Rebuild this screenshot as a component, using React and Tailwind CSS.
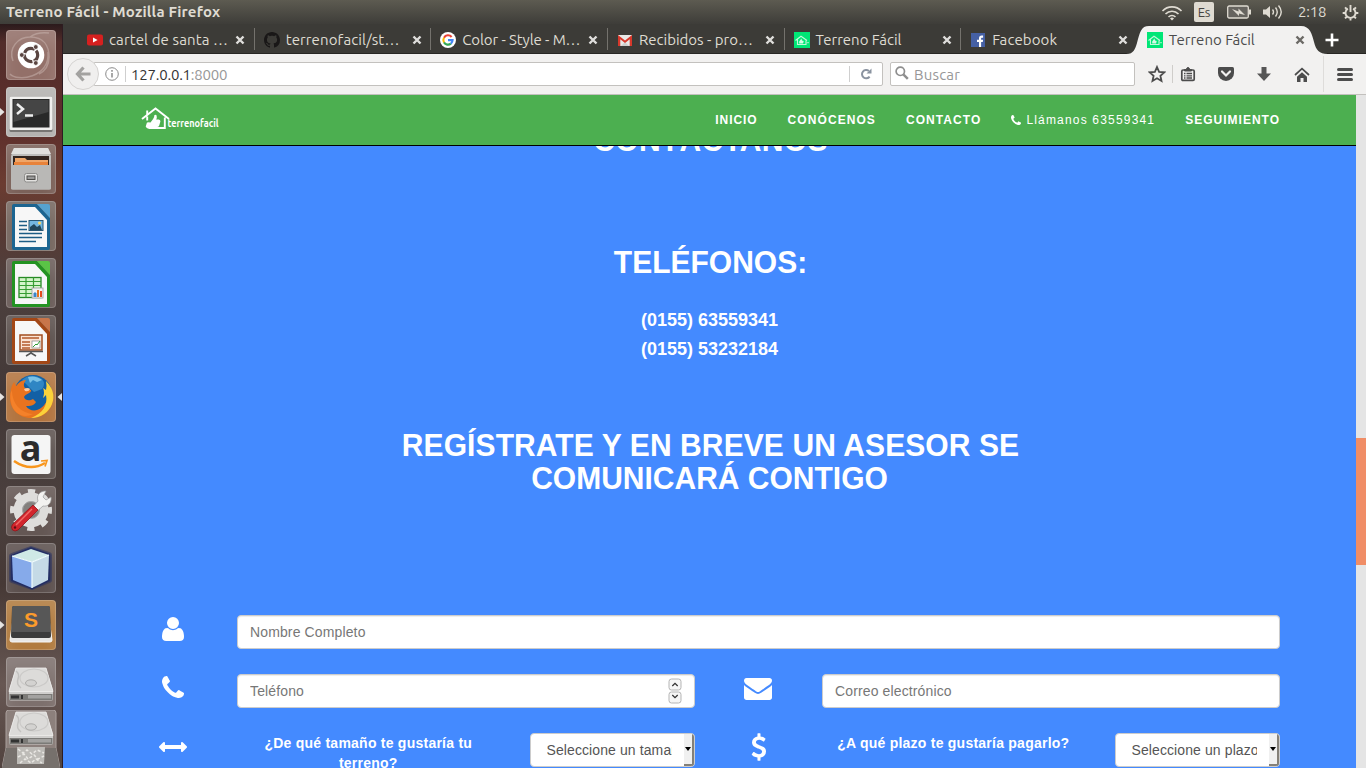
import React from "react";

const UBUNTU = "font-['Ubuntu','Noto_Sans',sans-serif]";

/* ---------- favicons ---------- */
function Youtube() {
  return (
    <svg viewBox="0 0 16 16" className="h-4 w-4">
      <rect x="0" y="2.5" width="16" height="11" rx="2" fill="#d6201f" />
      <path d="M6 5.5v5l4.6-2.5z" fill="#fff" />
    </svg>
  );
}
function Github() {
  return (
    <svg viewBox="0 0 16 16" className="h-4 w-4">
      <path
        fill="#191717"
        d="M8 0C3.58 0 0 3.58 0 8c0 3.54 2.29 6.53 5.47 7.59.4.07.55-.17.55-.38 0-.19-.01-.82-.01-1.49-2.01.37-2.53-.49-2.69-.94-.09-.23-.48-.94-.82-1.13-.28-.15-.68-.52-.01-.53.63-.01 1.08.58 1.23.82.72 1.21 1.87.87 2.33.66.07-.52.28-.87.51-1.07-1.78-.2-3.64-.89-3.64-3.95 0-.87.31-1.59.82-2.15-.08-.2-.36-1.02.08-2.12 0 0 .67-.21 2.2.82.64-.18 1.32-.27 2-.27s1.36.09 2 .27c1.53-1.04 2.2-.82 2.2-.82.44 1.1.16 1.92.08 2.12.51.56.82 1.27.82 2.15 0 3.07-1.87 3.75-3.65 3.95.29.25.54.73.54 1.48 0 1.07-.01 1.93-.01 2.2 0 .21.15.46.55.38A8.01 8.01 0 0 0 16 8c0-4.42-3.58-8-8-8z"
      />
    </svg>
  );
}
function Google() {
  return (
    <svg viewBox="0 0 16 16" className="h-4 w-4" fill="none" strokeWidth="2.1">
      <circle cx="8" cy="8" r="8" fill="#fff" />
      <path d="M11.6 5A4.6 4.6 0 0 0 4 5.7" stroke="#ea4335" />
      <path d="M4 5.7a4.7 4.7 0 0 0 0 4.7" stroke="#fbbc05" />
      <path d="M4 10.4a4.6 4.6 0 0 0 6.9 1.2" stroke="#34a853" />
      <path d="M8 8.1h4.6a4.6 4.6 0 0 1-1.7 3.5" stroke="#4285f4" />
    </svg>
  );
}
function Gmail() {
  return (
    <svg viewBox="0 0 16 16" className="h-4 w-4">
      <rect x="1" y="3" width="14" height="11" fill="#e9e9e7" />
      <path d="M4 14l4-4 4 4z" fill="#cfcfcd" />
      <path d="M1 14V3l7 5.5L15 3v11h-2.3V7.3L8 11 3.3 7.3V14z" fill="#d8382b" />
    </svg>
  );
}
function House() {
  return (
    <svg viewBox="0 0 16 16" className="h-4 w-4">
      <rect width="16" height="16" fill="#00e676" />
      <path d="M1.500 8.500L7 4.200l6 4.300M3.500 7.500v5h8.500V8.500" fill="none" stroke="#c3f7da" strokeWidth="1.100" />
      <path d="M5.200 11.500V9.500L7.400 6.500l.6 2 1.700.5-.6 2.500z" fill="#d5fae5" />
      <path d="M12.500 10.700h2.500" stroke="#a0f0c4" />
    </svg>
  );
}
function Facebook() {
  return (
    <svg viewBox="0 0 16 16" className="h-4 w-4">
      <rect x="1" y="1" width="14" height="14" fill="#4560a4" />
      <path d="M9 15V10H7V7.8h2V6.3C9 4.5 10 3.6 11.7 3.6h1.4v2.1h-1c-.8 0-1 .4-1 1v1.1h2L12.800 10h-1.700v5z" fill="#fff" />
    </svg>
  );
}

const TABS = [
  { icon: Youtube, label: "cartel de santa …", cls: "tracking-[0.12px]" },
  { icon: Github, label: "terrenofacil/st…", cls: "tracking-[0.12px]" },
  { icon: Google, label: "Color - Style - M…", cls: "tracking-[-0.1px]" },
  { icon: Gmail, label: "Recibidos - pro…", cls: "tracking-[0px]" },
  { icon: House, label: "Terreno Fácil", cls: "tracking-[0px]" },
  { icon: Facebook, label: "Facebook", cls: "tracking-[0.1px]" },
  { icon: House, label: "Terreno Fácil", cls: "tracking-[0px]", active: true },
];

function Tab({ tab, divider }) {
  const Icon = tab.icon;
  return (
    <div className="relative flex h-[29px] w-[176.650px] shrink-0 items-center">
      {tab.active && (
        <svg viewBox="0 0 204 28" className="absolute top-[2px] left-[-12px] h-[28px] w-[204px]">
          <path d="M0 28C8 28 9 23 11 17C14 6 15 0 23 0H175C184 0 186 8 188 16C190 24 193 28 202 28Z" fill="#f2f1f0" />
        </svg>
      )}
      <div className="relative flex h-full w-full items-center pt-[3px] pl-[9px]">
        <Icon />
        <span
          className={`-mt-[2px] ml-[6px] w-[124px] text-[15px] leading-none whitespace-nowrap ${tab.cls} ${
            tab.active ? "text-[#4c4c4c]" : "text-[#dfdbd2]"
          }`}
        >
          {tab.label}
        </span>
        <svg viewBox="0 0 10 10" className="ml-[2px] h-[10px] w-[10px]">
          <path d="M1.500 1.500L8.500 8.500M8.500 1.500L1.500 8.500" strokeWidth="2.400" stroke={tab.active ? "#6b6965" : "#dfdedc"} />
        </svg>
      </div>
      {divider && <div className="h-[22px] w-px shrink-0 bg-[#74726d]" />}
    </div>
  );
}

/* ---------- top panel ---------- */
function TopPanel() {
  return (
    <div className="flex h-6 items-center bg-linear-to-b from-[#5d5b51] to-[#3e3d39] pl-[6px] text-[#dfdbd2]">
      <span className="-mt-[2px] text-[15px] leading-none font-bold tracking-[0.200px] whitespace-nowrap">Terreno Fácil - Mozilla Firefox</span>
      <svg viewBox="0 0 22 16" className="mt-[1px] ml-auto h-4 w-[22px]" fill="none" stroke="#dfdbd2" strokeWidth="1.600">
        <path d="M1.500 6A13 13 0 0 1 20.500 6M4.500 9a9 9 0 0 1 13 0M7.500 12a5 5 0 0 1 7 0" />
        <path d="M9 13.500a3 3 0 0 1 4 0L11 15.500z" fill="#dfdbd2" stroke="none" />
      </svg>
      <span className="ml-[11px] flex h-5 w-5 items-center justify-center rounded-[2px] bg-[#dfdbd2] text-[13px] leading-none tracking-[-0.300px] text-[#45433f]">
        Es
      </span>
      <svg viewBox="0 0 24 14" className="ml-[13px] h-[14px] w-6">
        <rect x="0.700" y="1" width="20.600" height="12" rx="1.500" fill="#66645f" stroke="#dfdbd2" strokeWidth="1.300" />
        <rect x="22" y="4.500" width="2" height="5" fill="#dfdbd2" />
        <path d="M5 4l6.500 2.500V3.500L18 10l-6-1.500V11z" fill="#dfdbd2" />
      </svg>
      <svg viewBox="0 0 21 16" className="ml-[12px] h-4 w-[21px]" fill="none" stroke="#dfdbd2" strokeWidth="1.400">
        <path d="M0 5.500h3L7 2v12l-4-3.500H0z" fill="#dfdbd2" stroke="none" />
        <path d="M9.500 5.500q2 2.500 0 5M12.500 3.500q3.500 4.500 0 9M15.500 1.500q5.500 6.500 0 13" />
      </svg>
      <span className="-mt-[2px] ml-[14px] w-[30px] text-[15px] leading-none tracking-[-0.200px]">2:18</span>
      <svg viewBox="0 0 18 18" className="mr-[7px] ml-[14px] h-[17px] w-[17px]" fill="none" stroke="#dfdbd2">
        <path d="M6.200 4.900a5.300 5.300 0 1 0 5.600 0" strokeWidth="2" />
        <path d="M9 1v7.500" strokeWidth="2" />
        <path d="M3.200 3.500l1.800 1.800M14.800 3.500L13 5.300M.7 9.500h2.800M14.500 9.500h2.800M3.200 15.300L5 13.500M14.800 15.300L13 13.500M9 15v2.600" strokeWidth="2" />
      </svg>
    </div>
  );
}

/* ---------- launcher icons, all on a 50x50 tile ---------- */
function Doc({ color, light, children }) {
  return (
    <>
      <path d="M8 3h23l13 14v30q0 2-2 2H8q-2 0-2-2V5q0-2 2-2z" fill={color} />
      <path d="M9 6h20l12 13v27H9z" fill="#f7f7f7" />
      <path d="M31 3h11q2 0 2 2v12z" fill={light} />
      {children}
    </>
  );
}
function Disk({ y = 0 }) {
  return (
    <g transform={`translate(0 ${y})`}>
      <path d="M10 11h30l7 22v9q0 1.500-2 1.500H5q-2 0-2-1.500v-9z" fill="#cfcecc" />
      <path d="M10 11h30l7 23.500H3z" fill="#dcdbd9" stroke="#efeeec" strokeWidth=".8" />
      <ellipse cx="28" cy="21" rx="14" ry="9" fill="none" stroke="#cbcac8" strokeWidth="1.200" />
      <ellipse cx="25" cy="26" rx="5.500" ry="3.200" fill="#d3d2d0" stroke="#aeadab" />
      <path d="M10 14q4 3 2 8t3 9" fill="none" stroke="#c3c2c0" strokeWidth="1.500" />
      <path d="M3.500 37h43v6h-43z" fill="#7b7a77" />
      <path d="M5 38.500h8v3H5zM15 38h2v4h-2z" fill="#333" />
      <path d="M22 38h23v3.500H22z" fill="#a3a2a0" />
    </g>
  );
}

const GLYPHS = {
  dash: (
    <>
      <path d="M7 31C2 18 12 7 24 7c14 0 19 9 19 20 0 8-4 14-10 17M4 44C11 52 44 48 42 22M43 3C34 2 28 4 24 7" fill="none" stroke="#d9c8c4" strokeWidth="1.500" opacity=".4" />
      <circle cx="25" cy="25" r="13.300" fill="#fff" />
      <circle cx="25" cy="25" r="6.700" fill="none" stroke="#5a4541" strokeWidth="3.200" strokeDasharray="12.500 1.530" strokeDashoffset="5" />
      <g fill="#5a4541" stroke="#fff" strokeWidth=".8">
        <circle cx="15.800" cy="25" r="2.400" />
        <circle cx="29.800" cy="17" r="2.400" />
        <circle cx="29.800" cy="33" r="2.400" />
      </g>
    </>
  ),
  terminal: (
    <>
      <rect x="3.500" y="9.500" width="43" height="35.500" rx="1.500" fill="#777573" />
      <rect x="3.500" y="9.500" width="43" height="33.500" rx="1.500" fill="#f0efee" />
      <rect x="6.500" y="12" width="37" height="28.500" fill="#292929" />
      <path d="M7.500 13h35v12L7.500 35z" fill="#454545" />
      <path d="M11 17l6 5-6 5" fill="none" stroke="#eee" strokeWidth="2.500" />
      <path d="M19 28.500h8" stroke="#eee" strokeWidth="2.500" />
    </>
  ),
  files: (
    <>
      <path d="M8 4h34l3 8v32q0 1.500-2 1.500H7q-2 0-2-1.500V12z" fill="#bebdbb" />
      <path d="M8 4h34l3 6H5z" fill="#e1e0de" />
      <path d="M7 12h36v9H7z" fill="#33251f" />
      <path d="M9 14h10l2 2h21v6H9z" fill="#efa568" />
      <path d="M8 18h34v4H8z" fill="#e8823a" />
      <path d="M5 21h40v23q0 1.500-2 1.500H7q-2 0-2-1.500z" fill="#b9b8b6" />
      <rect x="18.500" y="29.500" width="13" height="8.500" rx="2" fill="#e2e1df" stroke="#8d8c8a" />
      <rect x="21" y="32" width="8" height="3.500" fill="#999" stroke="#4e4d4b" />
    </>
  ),
  writer: (
    <Doc color="#1c6591" light="#56a2cf">
      <path d="M13 20.500h8M13 24.500h8M13 28.500h8M13 32.500h23M13 36.500h23M13 40.500h17" stroke="#1d5d85" strokeWidth="1.700" />
      <rect x="23" y="19.500" width="14" height="10" fill="#73b6df" stroke="#275774" />
      <path d="M24 29v-3l4-3 3 3 3-2 2 5z" fill="#21465a" />
      <circle cx="33.500" cy="22" r="1.500" fill="#ffd760" />
    </Doc>
  ),
  calc: (
    <Doc color="#239322" light="#5ac446">
      <rect x="13" y="19.500" width="22" height="20" fill="#d4f4ca" stroke="#268a24" strokeWidth="1.300" />
      <path d="M13 23.500h22M13 27.500h22M13 31.500h22M13 35.500h22M20 19.500v20M27.500 19.500v20" stroke="#379d33" strokeWidth="1.200" />
      <rect x="26" y="30" width="11" height="10" fill="#f2f2f2" stroke="#999" strokeWidth=".8" />
      <path d="M28 39v-4h2v4" fill="#3b86c9" stroke="#3b86c9" />
      <path d="M31 39v-7h2v7z" fill="#e8741c" />
      <path d="M34 39v-6h2v6z" fill="#e34b20" />
    </Doc>
  ),
  impress: (
    <Doc color="#a34716" light="#c8754a">
      <rect x="14" y="20" width="22" height="15" fill="#fbe4d5" stroke="#a34d1f" strokeWidth="1.500" />
      <path d="M16 23h17M16 27h8M16 30h8M16 33h8" stroke="#b45a2c" strokeWidth="1.500" />
      <rect x="26" y="26" width="8" height="7" fill="#fff" stroke="#888" strokeWidth=".7" />
      <path d="M27 32l3-3 1 1 3-4" stroke="#2c9b35" fill="none" />
      <path d="M13 36.500h24M25 36v2l-5 3M25 38l5 3" stroke="#555" strokeWidth="1.500" fill="none" />
    </Doc>
  ),
  firefox: (
    <>
      <circle cx="27" cy="22" r="19" fill="#1260a5" />
      <path d="M16 8Q25 0 36 7q4 5 0 10l-8 3-6-6z" fill="#2f86c4" />
      <path d="M22 5q8-2 14 3l-5 2-4-2-3 3z" fill="#7cc2e6" />
      <path
        d="M42 13c5 6 6 13 4 19-3 9-11 14-21 14C13 46 4 37 4 26c0-6 1-12 4-16l2 4c3-4 6-6 10-6-2 3-3 5-1 8l6 2c1 3-6 4-7 7 1 4 6 4 9 2l3 3c-2 4-6 4-10 4 3 5 10 6 15 2 7-5 9-14 7-23z"
        fill="#e8731f"
      />
      <path d="M40 9c7 7 9 15 6 23-3 8-11 14-21 14 12-5 17-13 15-23l-3 3q2-6 0-10l3 2q1-4 0-9z" fill="#fbd23a" />
      <path d="M6 18c0 14 9 23 21 24-9 5-20 0-22-12-1-5-1-9 1-12z" fill="#f4812a" />
      <path d="M18 17q4-2 6 0-1 3-5 2z" fill="#f8cba5" />
    </>
  ),
  amazon: (
    <>
      <rect x="5.500" y="6" width="39" height="39" rx="3" fill="#f5f5f5" />
      <text x="24.500" y="31.500" textAnchor="middle" fontFamily="Open Sans, sans-serif" fontWeight="700" fontSize="36" fill="#2c2c2c">a</text>
      <path d="M8 32q16 11 31 2" fill="none" stroke="#f8961d" strokeWidth="2.500" />
      <path d="M35 32l6-.5-2 6" fill="none" stroke="#f8961d" strokeWidth="1.700" />
    </>
  ),
  settings: (
    <>
      <circle cx="25" cy="24" r="13" fill="none" stroke="#dedddb" strokeWidth="9" />
      <circle cx="25" cy="24" r="18" fill="none" stroke="#dedddb" strokeWidth="6" strokeDasharray="7 7.130" strokeDashoffset="3.500" />
      <circle cx="25" cy="24" r="8.500" fill="#83807d" stroke="#aaa" />
      <path d="M23 25l9-10c-2-6 2-10 8-10l-3 6 3 3 5-3c1 6-3 10-8 9L27 29z" fill="#f3f2f0" stroke="#999" strokeWidth=".7" />
      <path d="M27 19l5 5-20 20q-3 2-5.500 0-2-3 0-5.500z" fill="#d2252c" stroke="#8e1419" strokeWidth=".8" />
      <path d="M26 23L10 39" stroke="#f06b67" strokeWidth="1.500" />
      <circle cx="9" cy="41.500" r="1.200" fill="#5b1013" />
    </>
  ),
  netbeans: (
    <>
      <path d="M25 6L43 12v25L26 44 6 37V13z" fill="#1c2a66" stroke="#1c2a66" strokeWidth="6" strokeLinejoin="round" opacity=".45" />
      <path d="M25 5.500L43 12v25L26 45 6 37V13z" fill="#1c2a66" stroke="#1c2a66" strokeWidth="2.500" strokeLinejoin="round" opacity=".8" />
      <path d="M25 6L43 12 26 19 6 13z" fill="#cfe9e6" />
      <path d="M6 13l20 6v26L7 37z" fill="#86aaea" />
      <path d="M26 19l17-7-1 25-16 8z" fill="#c5dae6" />
      <path d="M6 13l20 6 17-7M26 19v26" fill="none" stroke="#f0fcfc" strokeWidth="1.200" />
    </>
  ),
  sublime: (
    <>
      <path d="M7 19L4 40q0 2 2 2h38q2 0 2-2l-3-21z" fill="#e8e7e5" stroke="#f6f5f3" />
      <path d="M8 6h34q2 0 2 2l1 28q0 2-2 2H7q-2 0-2-2L6 8q0-2 2-2z" fill="#3c3c3c" />
      <path d="M8 6h34q2 0 2 2v24H6V8q0-2 2-2z" fill="#575757" />
      <text x="25" y="27" textAnchor="middle" fontFamily="Liberation Sans, sans-serif" fontWeight="700" fontSize="21" fill="#fb9b2c">S</text>
    </>
  ),
  disk: <Disk />,
};

const LAUNCHERS = [
  { id: "dash", bg: "bg-[#937069]" },
  { id: "terminal", bg: "bg-[#b4b2b0]", left: true },
  { id: "files", bg: "bg-[#7b6159]" },
  { id: "writer", bg: "bg-[#75665f]" },
  { id: "calc", bg: "bg-[#6a5c59]" },
  { id: "impress", bg: "bg-[#5b504d]" },
  { id: "firefox", bg: "bg-[#b2743f]", left: true, right: true },
  { id: "amazon", bg: "bg-[#5d5350]" },
  { id: "settings", bg: "bg-[#645754]" },
  { id: "netbeans", bg: "bg-[#5c504e]" },
  { id: "sublime", bg: "bg-[#b17b3f]", left: true },
  { id: "disk", bg: "bg-[#7d706d]" },
];

function Launcher() {
  return (
    <aside className="flex h-full w-[63px] shrink-0 flex-col gap-[7px] overflow-hidden border-r border-[#2d1c22] bg-[linear-gradient(180deg,#2b1a1c_0px,#522c2a_18px,#5f302c_110px,#6b3c31_160px,#573a34_210px,#4d403e_260px,#423837_380px,#4b403e_480px,#463936_560px,#675753_660px,#51433f_744px)] pt-[6px]">
      {LAUNCHERS.map((l) => (
        <div key={l.id} className="flex h-[50px] shrink-0 items-center">
          <svg viewBox="0 0 6 10" className="h-[10px] w-[6px] shrink-0">
            {l.left && <path d="M0 1l4.500 4L0 9z" fill="#e5e3e1" />}
          </svg>
          <div className={`h-[50px] w-[50px] shrink-0 rounded-[4px] shadow-[inset_0_0_0_1px_rgba(255,255,255,0.18),inset_0_14px_16px_rgba(255,255,255,0.13)] ${l.bg}`}>
            <svg viewBox="0 0 50 50" className="h-[50px] w-[50px]">{GLYPHS[l.id]}</svg>
          </div>
          <svg viewBox="0 0 6 10" className="h-[10px] w-[6px] shrink-0">
            {l.right && <path d="M6 1L1.500 5 6 9z" fill="#e5e3e1" />}
          </svg>
        </div>
      ))}
      <svg viewBox="0 0 58 58" className="-mt-[4px] ml-[2px] h-[58px] w-[58px] shrink-0">
        <path d="M7 0h44q3 0 3 3v35l4 20H0l4-20V3q0-3 3-3z" fill="#8c807c" stroke="#aaa09d" />
        <path d="M4 38h50l4 20H0z" fill="#76706c" />
        <path d="M15 37h28l-1 17H15z" fill="#bdbbb7" />
        <path d="M16 39l5 4 4-3 5 4 5-4 7 3M16 47l6-3 4 5 6-4 4 4 6-3M18 53l5-4 6 4 5-4 6 4" stroke="#e9e7e3" strokeWidth="1.500" fill="none" strokeDasharray="3 2" />
        <g transform="translate(4 -9)">
          <Disk />
        </g>
      </svg>
    </aside>
  );
}

/* ---------- browser toolbar ---------- */
function Toolbar() {
  return (
    <div className="flex h-[41px] shrink-0 items-center border-b border-[#c2c0bd] bg-[#f2f1f0] pl-[4px]">
      <div className="z-10 flex h-[32px] w-[32px] shrink-0 items-center justify-center rounded-full border border-[#d5d3d1] bg-[#f0efee]">
        <svg viewBox="0 0 16 16" className="h-4 w-4" fill="none" stroke="#a3a2a0" strokeWidth="3.200">
          <path d="M8.500 1.500L2.500 8l6 6.500M3 8h12.500" />
        </svg>
      </div>
      <div className="-ml-[5px] flex h-[24px] w-[789px] shrink-0 items-center rounded-r-[2px] border border-[#c3c1be] bg-white pl-[10px]">
        <svg viewBox="0 0 14 14" className="h-[14px] w-[14px]">
          <circle cx="7" cy="7" r="6.300" fill="none" stroke="#8b8b8b" />
          <path d="M7 6v4.500M7 3v1.700" stroke="#8b8b8b" strokeWidth="1.500" />
        </svg>
        <div className="ml-[6px] h-4 w-px bg-[#cfcfcf]" />
        <span className="ml-[5px] text-[15px] leading-none tracking-[-0.220px] text-[#333]">
          127.0.0.1<span className="text-[#979797]">:8000</span>
        </span>
        <div className="ml-auto h-4 w-px bg-[#cfcfcf]" />
        <svg viewBox="0 0 12 12" className="mr-[10px] ml-[10px] h-3 w-3">
          <path d="M9.600 8.600a4.200 4.200 0 1 1-.7-5.700" fill="none" stroke="#8a93a0" strokeWidth="2" />
          <path d="M11.500.5v5H6.500z" fill="#8a93a0" />
        </svg>
      </div>
      <div className="ml-[7px] flex h-[24px] w-[245px] shrink-0 items-center rounded-[2px] border border-[#c3c1be] bg-white pl-[4px]">
        <svg viewBox="0 0 14 14" className="-mt-[2px] h-[14px] w-[14px]" fill="none" stroke="#8e8e8e">
          <circle cx="5.300" cy="5.300" r="4.200" strokeWidth="1.700" />
          <path d="M8.300 8.300l4.500 4.500" strokeWidth="2.500" />
        </svg>
        <span className="ml-[5px] text-[15px] leading-none tracking-[0.200px] text-[#979797]">Buscar</span>
      </div>
      <svg viewBox="0 0 18 18" className="ml-[13px] h-[18px] w-[18px] shrink-0" fill="none" stroke="#4c4c4c" strokeWidth="1.800">
        <path d="M9 2l2.100 4.800 5.200.5-3.900 3.500 1.100 5.200L9 13.300 4.500 16l1.100-5.200L1.700 7.300l5.200-.5z" />
      </svg>
      <div className="ml-[6px] h-[18px] w-px bg-[#cfcdca]" />
      <svg viewBox="0 0 16 16" className="ml-[7px] h-4 w-4 shrink-0">
        <path d="M3 4h10q1.200 0 1.200 1.200v8q0 1.200-1.200 1.200H3q-1.200 0-1.200-1.200v-8Q1.800 4 3 4z" fill="none" stroke="#4c4c4c" strokeWidth="1.700" />
        <path d="M4.500 5V3.500h2q0-2 1.500-2t1.500 2h2V5z" fill="#4c4c4c" stroke="#4c4c4c" />
        <path d="M4 7.500h1.500M6.500 7.500H12M4 9.800h1.500M6.500 9.800H12M4 12h1.500M6.500 12H12" stroke="#4c4c4c" strokeWidth="1.300" />
      </svg>
      <svg viewBox="0 0 16 14" className="ml-[22px] h-[14px] w-4 shrink-0">
        <path d="M1.500 0h13Q16 0 16 1.500V6q0 3.500-2.300 5.500T8 14q-3.500-.5-5.700-2.500T0 6V1.500Q0 0 1.500 0z" fill="#4c4c4c" />
        <path d="M4 4.500l4 4 4-4" fill="none" stroke="#f2f1f0" strokeWidth="2.200" strokeLinecap="round" />
      </svg>
      <svg viewBox="0 0 14 14" className="ml-[23px] h-[14px] w-[14px] shrink-0">
        <path d="M4.500 0h5v6.500H14L7 14 0 6.500h4.500z" fill="#565656" />
      </svg>
      <svg viewBox="0 0 16 15" className="ml-[23px] h-[15px] w-4 shrink-0">
        <path d="M1 8L8 1.600l7 6.400" fill="none" stroke="#4c4c4c" strokeWidth="1.700" />
        <path d="M3 9.700l5-4.400 5 4.400V15H9.500v-4h-3v4H3z" fill="#4c4c4c" />
      </svg>
      <div className="ml-[13px] h-[36px] w-px bg-[#dedcda]" />
      <div className="ml-[13px] flex flex-col gap-[2px]">
        <div className="h-[3px] w-4 rounded-sm bg-[#4c4c4c]" />
        <div className="h-[3px] w-4 rounded-sm bg-[#4c4c4c]" />
        <div className="h-[3px] w-4 rounded-sm bg-[#4c4c4c]" />
      </div>
    </div>
  );
}

/* ---------- page icons ---------- */
const PHONE =
  "M1408 1240q0 27-10 70.5t-21 68.5q-21 50-122 106-94 51-186 51-27 0-53-3.500t-57.500-12.500-47-14.500-55.500-20.500-49-18q-98-35-175-83-127-79-264-216t-216-264q-48-77-83-175-3-9-18-49t-20.500-55.500-14.500-47-12.500-57.500-3.500-53q0-92 51-186 56-101 106-122 25-11 68.500-21t70.500-10q14 0 21 3 18 6 53 76 11 19 30 54t35 63.500 31 53.500q3 4 17.500 25t21.500 35.500 7 28.500q0 20-28.500 50t-62 55-62 53-28.500 46q0 9 5 22.500t8.500 20.500 14 24 11.500 19q76 137 174 235t235 174q2 1 19 11.500t24 14 20.500 8.500 22.500 5q18 0 46-28.500t53-62 55-62 50-28.500q14 0 28.500 7t35.500 21.500 25 17.500q25 15 53.500 31t63.500 35 54 30q70 35 76 53 3 7 3 21z";
const USER =
  "M1408 1277q0 120-73 189.500t-194 69.500h-874q-121 0-194-69.500t-73-189.500q0-53 3.500-103.500t14-109 26.500-108.500 43-97.500 62-81 85.500-53.500 111.500-20q9 0 42 21.500t74.500 48 108 48 133.500 21.500 133.500-21.500 108-48 74.500-48 42-21.500q61 0 111.500 20t85.500 53.500 62 81 43 97.500 26.500 108.500 14 109 3.500 103.500zm-320-893q0 159-112.500 271.500t-271.500 112.500-271.500-112.500-112.500-271.500 112.500-271.500 271.500-112.500 271.500 112.500 112.500 271.500z";
const ENVELOPE =
  "M1792 710v794q0 66-47 113t-113 47h-1472q-66 0-113-47t-47-113v-794q44 49 101 87 362 246 497 345 57 42 92.500 65.500t94.500 48 110 24.500h2q51 0 110-24.500t94.500-48 92.500-65.500q170-123 498-345 57-39 100-87zm0-294q0 79-49 151t-122 123q-376 261-468 325-10 7-42.500 31t-54 38.500-52 32.500-57.500 27-50 9h-2q-23 0-50-9t-57.500-27-52-32.500-54-38.500-42.500-31q-91-64-262-182.500t-205-142.500q-62-42-117-115.500t-55-136.500q0-78 41.500-130t118.500-52h1472q65 0 112.500 47t47.500 113z";
const ARROWS =
  "M1792 640q0 26-19 45l-256 256q-19 19-45 19t-45-19-19-45v-128h-1024v128q0 26-19 45t-45 19-45-19l-256-256q-19-19-19-45t19-45l256-256q19-19 45-19t45 19 19 45v128h1024v-128q0-26 19-45t45-19 45 19l256 256q19 19 19 45z";
const DOLLAR =
  "M978 1185q0 153-99.500 263.500t-258.500 136.500v175q0 14-9 23t-23 9h-135q-13 0-22.500-9.500t-9.500-22.500v-175q-66-9-127.500-31t-101.500-44.500-74-48-46.500-37.500-17.500-18q-17-21-2-41l103-135q7-10 23-12 15-2 24 9l2 2q113 99 243 125 37 8 74 8 81 0 142.500-43t61.500-122q0-28-15-53t-33.500-42-58.500-37.500-66-32-80-32.500q-39-16-61.500-25t-61.500-26.500-62.500-31-56.500-35.500-53.500-42.500-43.500-49-35.500-58-21-66.500-8.500-78q0-138 98-242t255-134v-180q0-13 9.500-22.500t22.500-9.500h135q14 0 23 9t9 23v176q57 6 110.500 23t87 33.500 63.500 37.500 39 29 15 14q17 18 5 38l-81 146q-8 15-23 16-14 3-27-7-3-3-14.500-12t-39-26.500-58.500-32-74.500-26-85.500-11.500q-95 0-155 43t-60 111q0 26 8.500 48t29.500 41.500 39.500 33 56 31 60.500 27 70 27.500q53 20 81 31.500t76 35 75.500 42.500 62 50 53 63.500 31.500 76.500 13 94z";

function Glyph({ d, box, cls }) {
  return (
    <svg viewBox={box} className={cls} fill="#fff">
      <path d={d} />
    </svg>
  );
}

function Field({ children, spinner }) {
  return (
    <div className="flex h-[34px] w-full items-center justify-between rounded-[4px] border border-[#ccc] bg-white pr-[12px] pl-[12px] text-[14px] leading-none tracking-[0.130px] text-[#777] shadow-[inset_0_1px_1px_rgba(0,0,0,0.075)]">
      <span className="scale-y-[1.06]">{children}</span>
      {spinner && (
        <svg viewBox="0 0 14 26" className="h-[26px] w-[14px]" fill="none">
          <rect x="1" y="1" width="12" height="11" rx="2.500" fill="#f6f6f6" stroke="#b5b5b5" />
          <rect x="1" y="14" width="12" height="11" rx="2.500" fill="#f6f6f6" stroke="#b5b5b5" />
          <path d="M4.300 8L7 5.400l2.700 2.600M4.300 17L7 19.600l2.700-2.600" stroke="#333" strokeWidth="1.300" />
        </svg>
      )}
    </div>
  );
}

function Select({ children }) {
  return (
    <div className="flex h-[34px] w-full items-center overflow-hidden rounded-[4px] border border-[#ccc] bg-white pl-[16px] text-[14px] text-[#555]">
      <span className="w-[125px] shrink-0 scale-y-[1.06] overflow-hidden leading-[20px] tracking-[0.100px] whitespace-nowrap">{children}</span>
      <div className="ml-auto flex h-[32px] w-[10px] shrink-0 items-center justify-center border-r-2 border-b-2 border-[#848078] bg-[#f0f0f0]">
        <svg viewBox="0 0 6 4" className="h-[4px] w-[6px]">
          <path d="M0 0h6L3 4z" fill="#000" />
        </svg>
      </div>
    </div>
  );
}

function Page() {
  return (
    <main className="flex min-w-0 flex-1 flex-col font-['Liberation_Sans',Arial,sans-serif] text-white">
      <nav className="flex h-[51px] shrink-0 items-center border-b border-black bg-[#4caf50] pr-[76px] pl-[77px]">
        <svg viewBox="0 0 80 28" className="h-[28px] w-[80px]">
          <path d="M2 13L15.500 2.500 29 13M7.200 9.500V4.500M7.200 10.500v4M24.800 11.500v10.500H9" fill="none" stroke="#fff" strokeWidth="1.900" />
          <path d="M6.500 18q0-1.500 1.500-1.700l2.500.2 2.600-3.500q1.400-2 1.200-3.800 1.500-1 2.300.2.600 2-.5 4h2.700q1.800.3 1.600 2l-1.200 4q-.6 1.500-2.200 1.500h-4l-2 1.500q-1.800.800-3.200.2T5.700 20.500z" fill="#fff" />
          <text x="27.500" y="20.500" fontFamily="Ubuntu, Noto Sans, sans-serif" fontWeight="700" fontSize="10.500" textLength="51" lengthAdjust="spacingAndGlyphs" fill="#fff">
            terrenofacil
          </text>
        </svg>
        <div className="ml-auto flex items-center gap-[30px] text-[12px] leading-[20px] font-bold tracking-[1.070px] whitespace-nowrap">
          <span className="tracking-[0.950px]">INICIO</span>
          <span>CONÓCENOS</span>
          <span>CONTACTO</span>
          <span className="flex items-center font-normal tracking-[1.180px]">
            <Glyph d={PHONE} box="0 128 1408 1408" cls="mr-[5px] h-[10px] w-[10px]" />
            Llámanos 63559341
          </span>
          <span className="tracking-[1px]">SEGUIMIENTO</span>
        </div>
      </nav>
      <section className="flex min-h-0 flex-1 flex-col overflow-hidden bg-[#448aff] text-center font-bold">
        <h2 className="-mt-[23px] scale-y-[1.07] pl-[2px] text-[30px] leading-[33px] tracking-[0.300px]">CONTÁCTANOS</h2>
        <h2 className="mt-[89px] scale-y-[1.07] pl-[2px] text-[30px] leading-[33px]">TELÉFONOS:</h2>
        <div className="mt-[28px] text-[18px] leading-[29px]">
          <p>(0155) 63559341</p>
          <p>(0155) 53232184</p>
        </div>
        <h2 className="mt-[64px] text-[30px] leading-[33px]">
          <span className="block scale-y-[1.07] pl-[2px] tracking-[0.100px]">REGÍSTRATE Y EN BREVE UN ASESOR SE</span>
          <span className="block scale-y-[1.07]">COMUNICARÁ CONTIGO</span>
        </h2>
        <form className="mx-auto mt-[121px] flex w-[1170px] flex-col gap-[25px] text-left font-normal">
          <div className="flex h-[34px]">
            <div className="flex w-[97.500px] justify-center pt-[2px]">
              <Glyph d={USER} box="0 0 1408 1536" cls="h-[24px] w-[22px]" />
            </div>
            <div className="w-[1072.500px] px-[15px]">
              <Field>Nombre Completo</Field>
            </div>
          </div>
          <div className="flex h-[34px]">
            <div className="flex w-[97.500px] justify-center pt-[2px]">
              <Glyph d={PHONE} box="0 128 1408 1408" cls="h-[22px] w-[22px]" />
            </div>
            <div className="w-[487.500px] px-[15px]">
              <Field spinner>Teléfono</Field>
            </div>
            <div className="flex w-[97.500px] justify-center pt-[4px]">
              <Glyph d={ENVELOPE} box="0 256 1792 1408" cls="h-[22px] w-[28px]" />
            </div>
            <div className="w-[487.500px] px-[15px]">
              <Field>Correo electrónico</Field>
            </div>
          </div>
          <div className="flex h-[34px] shrink-0">
            <div className="flex w-[97.500px] justify-center pt-[9px]">
              <Glyph d={ARROWS} box="0 320 1792 640" cls="h-[10px] w-[28px]" />
            </div>
            <div className="w-[292.500px] px-[15px] text-center text-[14px] leading-[20px] font-bold tracking-[0.240px]">
              ¿De qué tamaño te gustaría tu
              <br />
              terreno?
            </div>
            <div className="w-[195px] px-[15px]">
              <Select>Seleccione un tamaño</Select>
            </div>
            <div className="flex w-[97.500px] justify-center">
              <Glyph d={DOLLAR} box="0 0 978 1792" cls="h-[28px] w-[15px]" />
            </div>
            <div className="w-[292.500px] px-[15px] text-center text-[14px] leading-[20px] font-bold tracking-[0.240px]">¿A qué plazo te gustaría pagarlo?</div>
            <div className="w-[195px] px-[15px]">
              <Select>Seleccione un plazo</Select>
            </div>
          </div>
        </form>
      </section>
    </main>
  );
}

export default function App() {
  return (
    <div className={`flex h-[768px] w-[1366px] flex-col overflow-hidden bg-[#3c3b37] ${UBUNTU}`}>
      <TopPanel />
      <div className="flex min-h-0 flex-1">
        <Launcher />
        <div className="flex min-w-0 flex-1 flex-col">
          <div className="flex h-[30px] shrink-0 border-b border-[#282724] bg-[#3c3b37] pl-[15px]">
            {TABS.map((t, i) => (
              <Tab key={i} tab={t} divider={i < 5} />
            ))}
            <svg viewBox="0 0 14 14" className="mt-[9px] ml-[11px] h-[14px] w-[14px]">
              <path d="M7 .5v13M.5 7h13" stroke="#fff" strokeWidth="2.600" />
            </svg>
          </div>
          <Toolbar />
          <div className="flex min-h-0 flex-1">
            <Page />
            <div className="w-[10px] shrink-0 bg-[#e5e5e5] pt-[343px]">
              <div className="h-[127px] bg-[#f08d66]" />
            </div>
          </div>
        </div>
      </div>
    </div>
  );
}
